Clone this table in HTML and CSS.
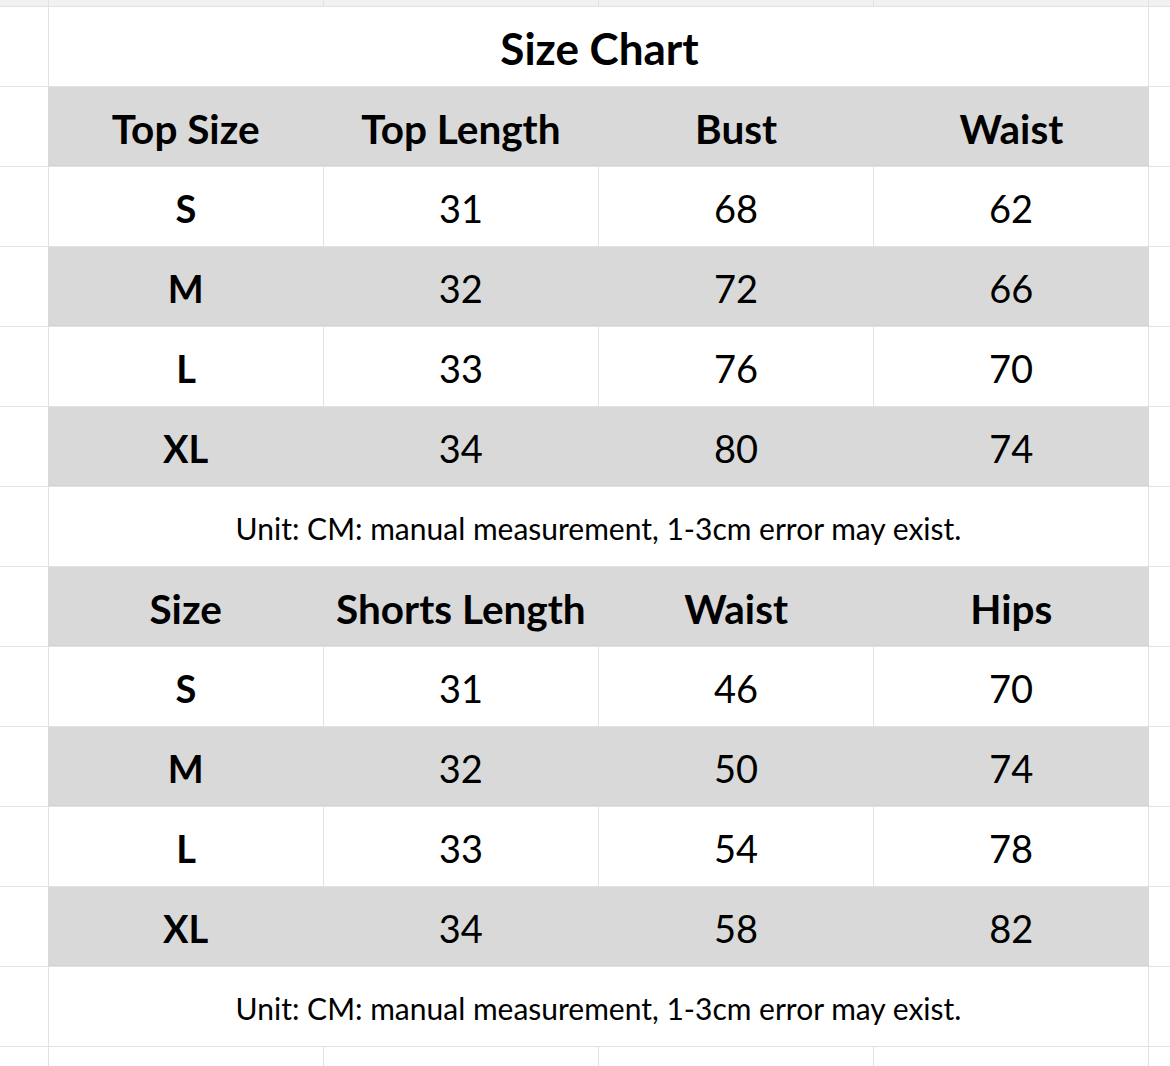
FILE: index.html
```html
<!DOCTYPE html>
<html>
<head>
<meta charset="utf-8">
<link rel="stylesheet" href="styles.css">
</head>
<body>
<div class="sheet">
  <div class="strip"></div><div class="strip"></div><div class="strip"></div><div class="strip"></div><div class="strip"></div><div class="strip"></div>

  <div class="side"></div><div class="merged title">Size Chart</div><div class="side"></div>

  <div class="side"></div>
  <div class="band head"><span>Top Size</span><span>Top Length</span><span>Bust</span><span>Waist</span></div>
  <div class="side"></div>

  <div class="side"></div><div class="cell b">S</div><div class="cell">31</div><div class="cell">68</div><div class="cell">62</div><div class="side"></div>
  <div class="side"></div>
  <div class="band"><span class="b">M</span><span>32</span><span>72</span><span>66</span></div>
  <div class="side"></div>
  <div class="side"></div><div class="cell b">L</div><div class="cell">33</div><div class="cell">76</div><div class="cell">70</div><div class="side"></div>
  <div class="side"></div>
  <div class="band"><span class="b">XL</span><span>34</span><span>80</span><span>74</span></div>
  <div class="side"></div>

  <div class="side"></div><div class="merged note">Unit: CM: manual measurement, 1-3cm error may exist.</div><div class="side"></div>

  <div class="side"></div>
  <div class="band head"><span>Size</span><span>Shorts Length</span><span>Waist</span><span>Hips</span></div>
  <div class="side"></div>

  <div class="side"></div><div class="cell b">S</div><div class="cell">31</div><div class="cell">46</div><div class="cell">70</div><div class="side"></div>
  <div class="side"></div>
  <div class="band"><span class="b">M</span><span>32</span><span>50</span><span>74</span></div>
  <div class="side"></div>
  <div class="side"></div><div class="cell b">L</div><div class="cell">33</div><div class="cell">54</div><div class="cell">78</div><div class="side"></div>
  <div class="side"></div>
  <div class="band"><span class="b">XL</span><span>34</span><span>58</span><span>82</span></div>
  <div class="side"></div>

  <div class="side"></div><div class="merged note">Unit: CM: manual measurement, 1-3cm error may exist.</div><div class="side"></div>

  <div class="side"></div><div class="cell"></div><div class="cell"></div><div class="cell"></div><div class="cell"></div><div class="side"></div>
</div>
</body>
</html>
```
FILE: styles.css
```css
html, body {
  margin: 0;
  padding: 0;
  background: #ffffff;
}
body {
  width: 1170px;
  height: 1066px;
  overflow: hidden;
  font-family: Lato, "Open Sans", sans-serif;
  color: #000000;
}
.sheet {
  display: grid;
  grid-template-columns: 48px 274px 274px 274px 274px 21px;
  grid-template-rows: 6px repeat(13, 79px) 20px;
  gap: 1px;
  background: #e2e2e2;
  width: 1170px;
}
.strip {
  background: #f1f1f1;
}
.side {
  background: #ffffff;
}
.cell, .band span, .merged {
  display: flex;
  align-items: center;
  justify-content: center;
  padding-top: 3px;
  box-sizing: border-box;
  font-size: 38px;
  white-space: nowrap;
}
.cell {
  background: #ffffff;
}
.merged {
  grid-column: span 4;
  background: #ffffff;
}
.band {
  grid-column: span 4;
  display: grid;
  grid-template-columns: repeat(4, 1fr);
  background: #d9d9d9;
  margin: 0 -1px;
  box-shadow: inset 0 -1px 0 #d2d2d2;
}
.head span, .b, .title {
  font-weight: 700;
}
.head span {
  font-size: 40.5px;
}
.title {
  font-size: 44px;
  padding-left: 2px;
  padding-top: 2px;
}
.note {
  font-size: 30px;
}
```
